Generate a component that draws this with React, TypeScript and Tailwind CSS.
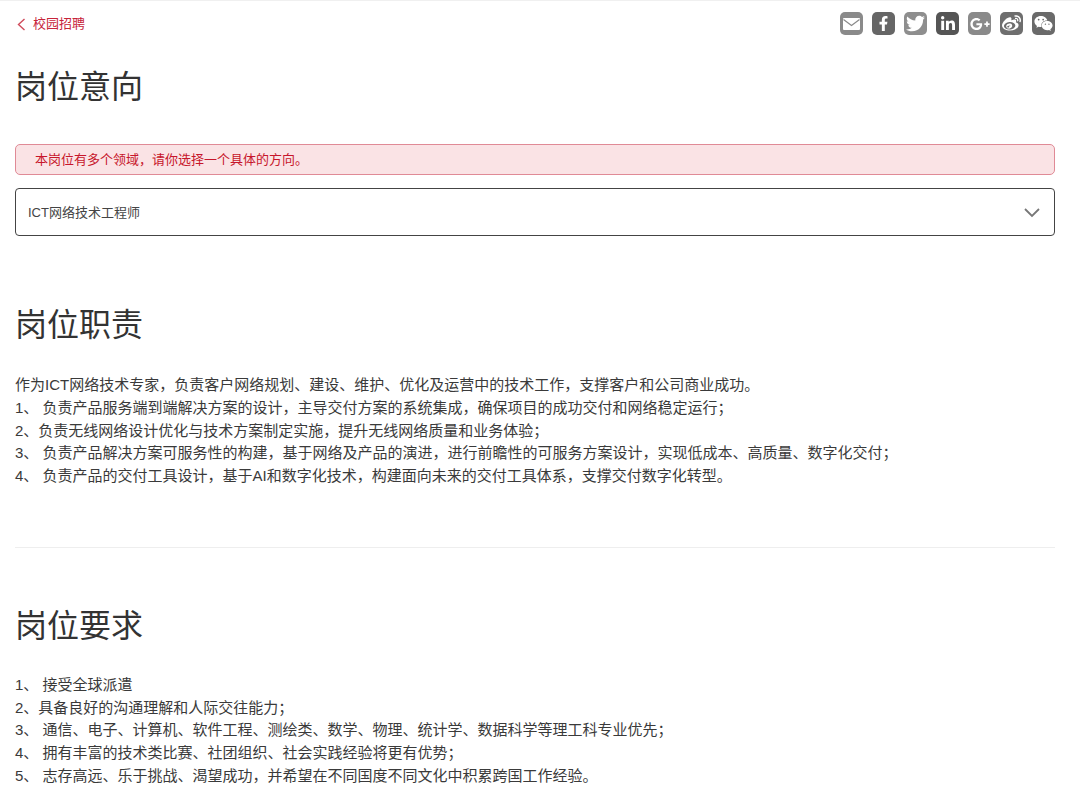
import { FaFacebookF, FaGooglePlusG, FaLinkedinIn, FaTwitter, FaWeibo, FaWeixin } from "react-icons/fa";

const duties = [
    "作为ICT网络技术专家，负责客户网络规划、建设、维护、优化及运营中的技术工作，支撑客户和公司商业成功。",
    "1、 负责产品服务端到端解决方案的设计，主导交付方案的系统集成，确保项目的成功交付和网络稳定运行；",
    "2、负责无线网络设计优化与技术方案制定实施，提升无线网络质量和业务体验；",
    "3、 负责产品解决方案可服务性的构建，基于网络及产品的演进，进行前瞻性的可服务方案设计，实现低成本、高质量、数字化交付；",
    "4、 负责产品的交付工具设计，基于AI和数字化技术，构建面向未来的交付工具体系，支撑交付数字化转型。",
];

const requirements = [
    "1、 接受全球派遣",
    "2、具备良好的沟通理解和人际交往能力；",
    "3、 通信、电子、计算机、软件工程、测绘类、数学、物理、统计学、数据科学等理工科专业优先；",
    "4、 拥有丰富的技术类比赛、社团组织、社会实践经验将更有优势；",
    "5、 志存高远、乐于挑战、渴望成功，并希望在不同国度不同文化中积累跨国工作经验。",
];

const MailGlyph = () => (
    <svg width="17" height="12" viewBox="0 0 17 12" fill="none">
        <rect width="17" height="12" rx="1" fill="white" />
        <path d="M0.5 1.5 8.5 7.5l8-6" stroke="#8a8a8a" strokeWidth="1.2" />
    </svg>
);

const socials = [
    { bg: "bg-[#8a8a8a]", icon: <MailGlyph /> },
    { bg: "bg-[#666666]", icon: <FaFacebookF size={15} color="white" /> },
    { bg: "bg-[#8e8e8e]", icon: <FaTwitter size={19} color="white" /> },
    { bg: "bg-[#555555]", icon: <FaLinkedinIn size={16} color="white" /> },
    { bg: "bg-[#8a8a8a]", icon: <FaGooglePlusG size={20} color="white" /> },
    { bg: "bg-[#6e6e6e]", icon: <FaWeibo size={19} color="white" /> },
    { bg: "bg-[#6a6a6a]", icon: <FaWeixin size={19} color="white" /> },
];

const TextBlock = ({ lines }: { lines: string[] }) => (
    <div className="text-[15px] leading-[22.75px] text-[#3a3a3a]">
        {lines.map((line, index) => (
            <p className="whitespace-pre" key={index}>{line}</p>
        ))}
    </div>
);

const App = () => {
    return (
        <div className="h-[809px] w-[1080px] overflow-hidden border-t border-[#f0f0f0] bg-white pl-[15px] pr-[25px] font-['Liberation_Sans','Noto_Sans_CJK_SC',sans-serif]">
            <div className="flex h-[46px] items-center justify-between">
                <div className="flex items-center gap-[7px] pl-[2px] text-[13px] text-[#c7243a]">
                    <svg width="9" height="13" viewBox="0 0 9 13" fill="none">
                        <path d="M7.5 1 1.5 6.5l6 5.5" stroke="#cf4a5a" strokeWidth="1.4" />
                    </svg>
                    <span>校园招聘</span>
                </div>
                <div className="mb-[1px] flex gap-[9px]">
                    {socials.map((el, index) => (
                        <div className={`flex h-[23px] w-[23px] items-center justify-center rounded-[5px] ${el.bg}`} key={index}>
                            {el.icon}
                        </div>
                    ))}
                </div>
            </div>

            <h1 className="mt-[16px] text-[32px] leading-[48px] font-normal text-[#333333]">岗位意向</h1>

            <div className="mt-[33px] flex h-[31px] items-center rounded-[5px] border border-[#e08a96] bg-[#fae3e5] pl-[19px] text-[13px] text-[#c7162b]">
                本岗位有多个领域，请你选择一个具体的方向。
            </div>
            <div className="mt-[13px] flex h-[48px] items-center justify-between rounded-[4px] border border-[#444444] pr-[13px] pl-[12px] text-[13px] text-[#444444]">
                <span className="pt-[1px]">ICT网络技术工程师</span>
                <svg width="18" height="11" viewBox="0 0 18 11" fill="none">
                    <path d="M2 2 9 9l7-7" stroke="#777777" strokeWidth="1.8" />
                </svg>
            </div>

            <h1 className="mt-[65px] text-[32px] leading-[48px] font-normal text-[#333333]">岗位职责</h1>
            <div className="mt-[25px]">
                <TextBlock lines={duties} />
            </div>

            <div className="mt-[59px] border-t border-[#eeeeee]" />

            <h1 className="mt-[54px] text-[32px] leading-[48px] font-normal text-[#333333]">岗位要求</h1>
            <div className="mt-[24px]">
                <TextBlock lines={requirements} />
            </div>
        </div>
    );
};

export default App;
